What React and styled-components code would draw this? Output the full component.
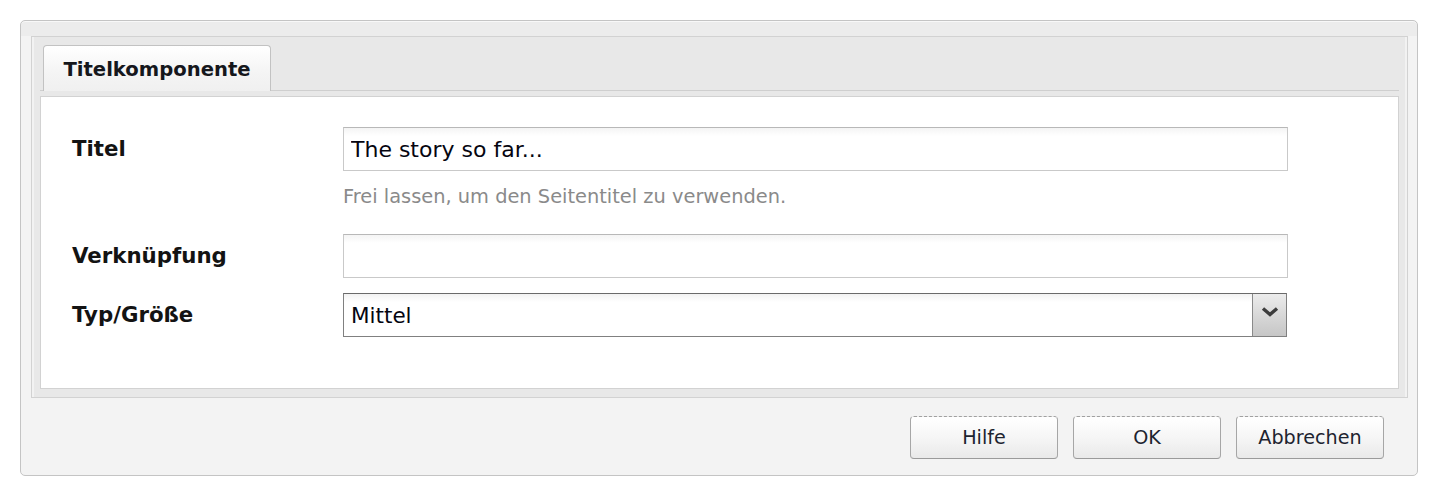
import styled, { createGlobalStyle } from 'styled-components';

const GlobalStyle = createGlobalStyle`
	html, body {
		margin: 0;
		padding: 0;
		background: #ffffff;
	}
	body {
		font-family: 'DejaVu Sans', Verdana, sans-serif;
	}
`;

export default function App() {
	return (
		<>
			<GlobalStyle />
			<Window>
				<Panel>
					<TabStrip>
						<Tab>Titelkomponente</Tab>
					</TabStrip>
					<Body>
						<Row>
							<Label>Titel</Label>
							<Field>
								<TextInput defaultValue="The story so far..." />
								<Help>Frei lassen, um den Seitentitel zu verwenden.</Help>
							</Field>
						</Row>
						<Row $gap={24}>
							<Label>Verknüpfung</Label>
							<Field>
								<TextInput defaultValue="" />
							</Field>
						</Row>
						<Row $gap={15}>
							<Label>Typ/Größe</Label>
							<Field>
								<Select>
									<SelectValue>Mittel</SelectValue>
									<Trigger>
										<svg width="20" height="12" viewBox="0 0 20 12">
											<polyline
												points="3,2.5 10,8.5 17,2.5"
												fill="none"
												stroke="#3c3c3c"
												strokeWidth="3.4"
											/>
										</svg>
									</Trigger>
								</Select>
							</Field>
						</Row>
					</Body>
				</Panel>
				<Footer>
					<Button>Hilfe</Button>
					<Button>OK</Button>
					<Button>Abbrechen</Button>
				</Footer>
			</Window>
		</>
	);
}

const Window = styled.div`
	box-sizing: border-box;
	margin: 20px 0 0 20px;
	width: 1398px;
	height: 456px;
	border: 1px solid #c4c4c4;
	border-radius: 5px;
	background: #f3f3f3;
	padding: 15px 9px 0 10px;
	box-shadow: inset 0 1px 0 #f8f8f8;
	background-image: linear-gradient(#ececec, #ececec);
	background-size: 100% 15px;
	background-repeat: no-repeat;
`;

const Panel = styled.div`
	border: 1px solid #d2d2d2;
	background: #e8e8e8;
	padding: 0 8px 8px 8px;
	box-shadow: inset 2px 0 0 #f2f2f2, inset -2px 0 0 #f2f2f2;
`;

const TabStrip = styled.div`
	display: flex;
	padding: 8px 0 0 3px;
	border-bottom: 1px solid #cfcfcf;
	height: 45px;
	box-sizing: content-box;
	margin-bottom: 5px;
`;

const Tab = styled.div`
	box-sizing: border-box;
	width: 228px;
	height: 46px;
	margin-bottom: -1px;
	border: 1px solid #c2c2c2;
	border-bottom: none;
	border-radius: 4px 4px 0 0;
	background: linear-gradient(#ffffff, #f4f4f4 60%, #f0f0f0);
	font-weight: bold;
	font-size: 19.6px;
	color: #15171c;
	display: flex;
	align-items: center;
	justify-content: center;
	padding-top: 2px;
`;

const Body = styled.div`
	background: #ffffff;
	border: 1px solid #d2d2d2;
	padding: 30px 0 51px 31px;
	display: flex;
	flex-direction: column;
`;

const Row = styled.div`
	display: flex;
	align-items: flex-start;
	margin-top: ${p => (p.$gap ? p.$gap : 0)}px;
`;

const Label = styled.div`
	width: 271px;
	line-height: 44px;
	font-size: 21.3px;
	font-weight: bold;
	color: #131313;
`;

const Field = styled.div`
	width: 945px;
	display: flex;
	flex-direction: column;
`;

const TextInput = styled.input`
	box-sizing: border-box;
	width: 945px;
	height: 44px;
	border: 1px solid #c9c9c9;
	border-top-color: #b8b8b8;
	background: linear-gradient(#f4f4f4, #ffffff 8px);
	padding: 0 7px;
	font-family: 'DejaVu Sans', Verdana, sans-serif;
	font-size: 22px;
	color: #050510;
	outline: none;
`;

const Help = styled.div`
	margin-top: 13px;
	line-height: 26px;
	font-size: 19.4px;
	color: #8a8a8a;
`;

const Select = styled.div`
	box-sizing: border-box;
	width: 944px;
	height: 44px;
	border: 1px solid #808080;
	border-top-color: #6a6a6a;
	background: linear-gradient(#f2f2f2, #ffffff 8px);
	display: flex;
	align-items: stretch;
`;

const SelectValue = styled.div`
	flex: 1;
	display: flex;
	align-items: center;
	padding-left: 7px;
	font-size: 21.5px;
	color: #050510;
`;

const Trigger = styled.div`
	width: 33px;
	border-left: 1px solid #8a8a8a;
	background: linear-gradient(#ececec, #d8d8d8 50%, #c6c6c6);
	display: flex;
	align-items: center;
	justify-content: center;
	padding-bottom: 6px;
`;

const Footer = styled.div`
	display: flex;
	justify-content: flex-end;
	gap: 15px;
	padding: 18px 24px 0 0;
`;

const Button = styled.button`
	box-sizing: border-box;
	width: 148px;
	height: 43px;
	border: 1px solid #a6a6a6;
	border-top: 1px dashed #a0a0a0;
	border-bottom-color: #9a9a9a;
	border-radius: 4px;
	background: linear-gradient(#ffffff, #f6f6f6 50%, #e9e9e9);
	font-family: 'DejaVu Sans', Verdana, sans-serif;
	font-size: 19.2px;
	color: #1e2430;
	padding: 0;
	cursor: pointer;
`;
